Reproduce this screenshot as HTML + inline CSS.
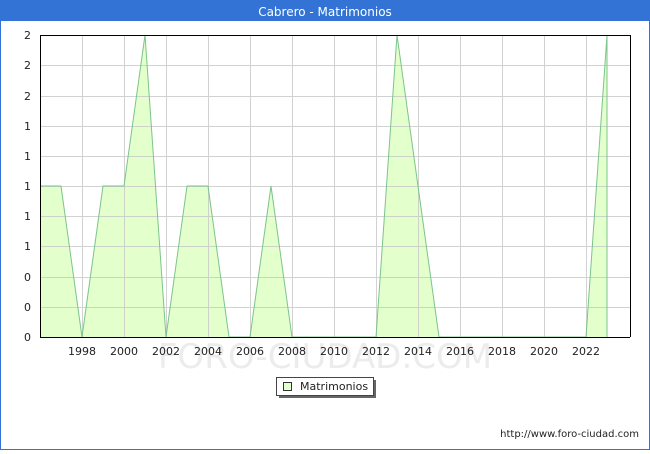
<!DOCTYPE html><html><head><style>
body{margin:0;width:650px;height:450px;overflow:hidden;background:#fff;font-family:"DejaVu Sans","Liberation Sans",sans-serif}
</style></head><body>
<svg width="650" height="450" xmlns="http://www.w3.org/2000/svg" font-family="DejaVu Sans, Liberation Sans, sans-serif">
<rect x="0.5" y="0.5" width="649" height="449" fill="#fff" stroke="#3373d6"/>
<rect x="0" y="0" width="650" height="21" fill="#3373d6"/>
<text x="325" y="16" fill="#fff" font-size="12" text-anchor="middle">Cabrero - Matrimonios</text>
<text x="325" y="368" font-size="34" fill="#ececec" text-anchor="middle">FORO-CIUDAD.COM</text>
<polygon fill="#e2ffcc" stroke="none" points="40,186 61,186 82,337 103,186 124,186 145,35 166,337 187,186 208,186 229,337 250,337 271,186 292,337 376,337 397,35 418,186 439,337 586,337 607,35 607,337 40,337"/>
<g stroke="#c8c8c8" stroke-width="1" opacity="0.8">
<line x1="40" y1="65.5" x2="630" y2="65.5"/><line x1="40" y1="96.5" x2="630" y2="96.5"/><line x1="40" y1="126.5" x2="630" y2="126.5"/><line x1="40" y1="156.5" x2="630" y2="156.5"/><line x1="40" y1="186.5" x2="630" y2="186.5"/><line x1="40" y1="216.5" x2="630" y2="216.5"/><line x1="40" y1="246.5" x2="630" y2="246.5"/><line x1="40" y1="277.5" x2="630" y2="277.5"/><line x1="40" y1="307.5" x2="630" y2="307.5"/>
<line x1="82.5" y1="35" x2="82.5" y2="337"/><line x1="124.5" y1="35" x2="124.5" y2="337"/><line x1="166.5" y1="35" x2="166.5" y2="337"/><line x1="208.5" y1="35" x2="208.5" y2="337"/><line x1="250.5" y1="35" x2="250.5" y2="337"/><line x1="292.5" y1="35" x2="292.5" y2="337"/><line x1="334.5" y1="35" x2="334.5" y2="337"/><line x1="376.5" y1="35" x2="376.5" y2="337"/><line x1="418.5" y1="35" x2="418.5" y2="337"/><line x1="460.5" y1="35" x2="460.5" y2="337"/><line x1="502.5" y1="35" x2="502.5" y2="337"/><line x1="544.5" y1="35" x2="544.5" y2="337"/><line x1="586.5" y1="35" x2="586.5" y2="337"/>
</g>
<polyline fill="none" stroke="#7cc48c" stroke-width="1" points="40,186 61,186 82,337 103,186 124,186 145,35 166,337 187,186 208,186 229,337 250,337 271,186 292,337 376,337 397,35 418,186 439,337 586,337 607,35 607,337"/>
<polyline fill="none" stroke="#000" stroke-width="1" points="40.5,35 40.5,337.5 630,337.5"/>
<line x1="40" y1="35.5" x2="630" y2="35.5" stroke="#000"/>
<line x1="630.5" y1="35" x2="630.5" y2="337" stroke="#000"/>
<g font-size="11" fill="#222" text-anchor="end">
<text x="31" y="39">2</text><text x="31" y="69">2</text><text x="31" y="100">2</text><text x="31" y="130">1</text><text x="31" y="160">1</text><text x="31" y="190">1</text><text x="31" y="220">1</text><text x="31" y="250">1</text><text x="31" y="281">0</text><text x="31" y="311">0</text><text x="31" y="341">0</text>
</g>
<g font-size="11" fill="#222" text-anchor="middle">
<text x="82" y="355">1998</text><text x="124" y="355">2000</text><text x="166" y="355">2002</text><text x="208" y="355">2004</text><text x="250" y="355">2006</text><text x="292" y="355">2008</text><text x="334" y="355">2010</text><text x="376" y="355">2012</text><text x="418" y="355">2014</text><text x="460" y="355">2016</text><text x="502" y="355">2018</text><text x="544" y="355">2020</text><text x="586" y="355">2022</text>
</g>
<rect x="279" y="380" width="97" height="18" fill="#666"/>
<rect x="276.5" y="377.5" width="97" height="18" fill="#fff" stroke="#444"/>
<rect x="283.5" y="382.5" width="8" height="8" fill="#e2ffcc" stroke="#333"/>
<text x="300" y="390" font-size="11" fill="#222">Matrimonios</text>
<text x="639" y="437" font-size="10" fill="#222" text-anchor="end">http://www.foro-ciudad.com</text>
</svg>
</body></html>
